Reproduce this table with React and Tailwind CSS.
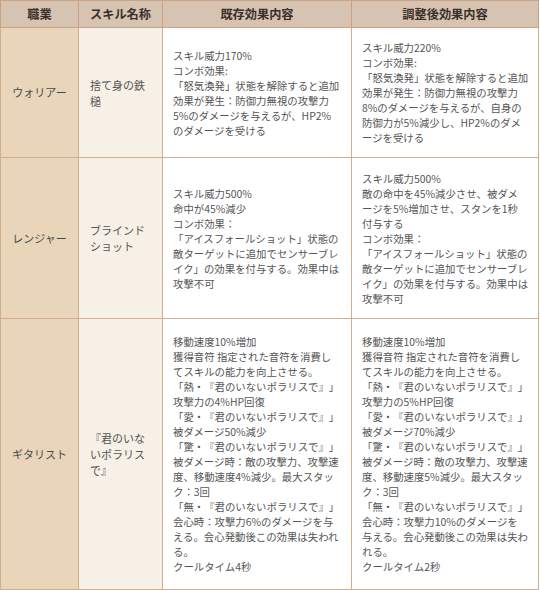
import React from "react";

const ROWS = [
    {
        job: "ウォリアー",
        skill: ["捨て身の鉄", "槌"],
        height: "h-[130px]",
        before: [
            "スキル威力170%",
            "コンボ効果:",
            "「怒気渙発」状態を解除すると追加",
            "効果が発生：防御力無視の攻撃力",
            "5%のダメージを与えるが、HP2%",
            "のダメージを受ける",
        ],
        after: [
            "スキル威力220%",
            "コンボ効果:",
            "「怒気渙発」状態を解除すると追加",
            "効果が発生：防御力無視の攻撃力",
            "8%のダメージを与えるが、自身の",
            "防御力が5%減少し、HP2%のダメ",
            "ージを受ける",
        ],
    },
    {
        job: "レンジャー",
        skill: ["ブラインド", "ショット"],
        height: "h-[161px]",
        before: [
            "スキル威力500%",
            "命中が45%減少",
            "コンボ効果：",
            "「アイスフォールショット」状態の",
            "敵ターゲットに追加でセンサーブレ",
            "イク」の効果を付与する。効果中は",
            "攻撃不可",
        ],
        after: [
            "スキル威力500%",
            "敵の命中を45%減少させ、被ダメ",
            "ージを5%増加させ、スタンを1秒",
            "付与する",
            "コンボ効果：",
            "「アイスフォールショット」状態の",
            "敵ターゲットに追加でセンサーブレ",
            "イク」の効果を付与する。効果中は",
            "攻撃不可",
        ],
    },
    {
        job: "ギタリスト",
        skill: ["『君のいな", "いポラリス", "で』"],
        height: "h-[271px]",
        before: [
            "移動速度10%増加",
            "獲得音符 指定された音符を消費し",
            "てスキルの能力を向上させる。",
            "「熱・『君のいないポラリスで』」",
            "攻撃力の4%HP回復",
            "「愛・『君のいないポラリスで』」",
            "被ダメージ50%減少",
            "「驚・『君のいないポラリスで』」",
            "被ダメージ時：敵の攻撃力、攻撃速",
            "度、移動速度4%減少。最大スタッ",
            "ク：3回",
            "「無・『君のいないポラリスで』」",
            "会心時：攻撃力6%のダメージを与",
            "える。会心発動後この効果は失われ",
            "る。",
            "クールタイム4秒",
        ],
        after: [
            "移動速度10%増加",
            "獲得音符 指定された音符を消費し",
            "てスキルの能力を向上させる。",
            "「熱・『君のいないポラリスで』」",
            "攻撃力の5%HP回復",
            "「愛・『君のいないポラリスで』」",
            "被ダメージ70%減少",
            "「驚・『君のいないポラリスで』」",
            "被ダメージ時：敵の攻撃力、攻撃速",
            "度、移動速度5%減少。最大スタッ",
            "ク：3回",
            "「無・『君のいないポラリスで』」",
            "会心時：攻撃力10%のダメージを",
            "与える。会心発動後この効果は失わ",
            "れる。",
            "クールタイム2秒",
        ],
    },
];

const HEADERS = ["職業", "スキル名称", "既存効果内容", "調整後効果内容"];

const Lines = ({ lines }) => (
    <div className="flex flex-col">
        {lines.map((line, i) => (
            <span key={i} className="whitespace-nowrap">
                {line}
            </span>
        ))}
    </div>
);

const App = () => {
    return (
        <div
            className="w-[540px] h-[590px] bg-white overflow-hidden [text-spacing-trim:space-all]"
            style={{ fontFamily: '"Noto Sans CJK JP", "Noto Sans", sans-serif' }}
        >
            <table className="table-fixed border-collapse w-[538px] text-[10.4px] leading-[15px] text-[#555555]">
                <colgroup>
                    <col className="w-[78px]" />
                    <col className="w-[84px]" />
                    <col className="w-[189px]" />
                    <col className="w-[187px]" />
                </colgroup>
                <thead>
                    <tr className="h-[27px] bg-[#d6c3b2]">
                        {HEADERS.map((h) => (
                            <th
                                key={h}
                                className="border border-[#c9a284] text-center text-[12.2px] font-bold text-[#3b3029] p-0"
                            >
                                {h}
                            </th>
                        ))}
                    </tr>
                </thead>
                <tbody>
                    {ROWS.map((row) => (
                        <tr key={row.job} className={row.height}>
                            <td className="border border-[#d2ad8e] bg-[#e8d5ba] text-center align-middle text-[#4a4a4a] text-[11px] p-0">
                                {row.job}
                            </td>
                            <td className="border border-[#d2ad8e] bg-[#f6f0e6] align-middle pl-[11px] pr-1 text-[11px] leading-[16px]">
                                <Lines lines={row.skill} />
                            </td>
                            <td className="border border-[#d2ad8e] bg-white align-middle pl-[10px] pr-1">
                                <Lines lines={row.before} />
                            </td>
                            <td className="border border-[#d2ad8e] bg-white align-middle pl-[10px] pr-1">
                                <Lines lines={row.after} />
                            </td>
                        </tr>
                    ))}
                </tbody>
            </table>
        </div>
    );
};

export default App;
